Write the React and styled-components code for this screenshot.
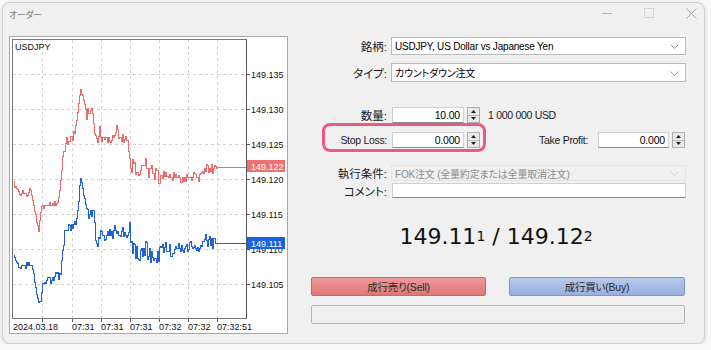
import React from 'react';
import styled, { createGlobalStyle } from 'styled-components';

const Global = createGlobalStyle`
  html, body { margin: 0; padding: 0; background: #f8f8f8; }
  body {
    font-family: "Liberation Sans", "Noto Sans CJK JP", sans-serif;
    font-size: 10px;
    letter-spacing: -0.2px;
    color: #000;
    font-feature-settings: "palt";
  }
`;

const Window = styled.div`
  margin: 2px 0 0 2px;
  width: 701px;
  height: 340px;
  border: 1px solid #cfcfcf;
  border-radius: 8px;
  background: #f0f0f0;
  box-shadow: 0 1px 4px rgba(0, 0, 0, 0.12);
  display: flex;
  flex-direction: column;
  overflow: hidden;
`;

const TitleBar = styled.div`
  height: 33px;
  display: flex;
  align-items: center;
  padding: 0 0 0 6px;
  box-sizing: border-box;
`;

const Title = styled.div`
  flex: 1;
  color: #7a7a7a;
  font-family: "Noto Sans CJK JP", sans-serif;
  font-size: 9px;
  letter-spacing: -0.4px;
  margin-top: -11px;
`;

const WinButton = styled.div`
  width: 26px;
  height: 22px;
  margin-left: 16px;
  display: flex;
  align-items: center;
  justify-content: center;
  margin-top: -13px;
`;

const Body = styled.div`
  flex: 1;
  display: flex;
`;

const ChartPanel = styled.div`
  margin-left: 6px;
  width: 277px;
  height: 296px;
  border: 1px solid #a8a8a8;
  background: #fff;
  line-height: 0;
`;

const FormPanel = styled.div`
  flex: 1;
  display: flex;
  flex-direction: column;
`;

const Row = styled.div`
  display: flex;
  align-items: center;
  height: ${(p) => p.$h || 16}px;
  margin-top: ${(p) => p.$mt || 0}px;
  position: relative;
`;

const Label = styled.div`
  width: ${(p) => p.$w || 99}px;
  text-align: right;
  color: #1a1a1a;
  white-space: nowrap;
  flex: none;
  font-size: ${(p) => (p.$latin ? 10.5 : 11.5)}px;
  letter-spacing: ${(p) => (p.$latin ? -0.3 : 0)}px;
`;

const SelectBox = styled.div`
  margin-left: 4px;
  width: 295px;
  height: 100%;
  box-sizing: border-box;
  border: 1px solid ${(p) => (p.$disabled ? '#e4e4e4' : '#b9b9b9')};
  background: ${(p) => (p.$disabled ? '#f0f0f0' : '#fff')};
  color: ${(p) => (p.$disabled ? '#8c8c8c' : '#000')};
  display: flex;
  align-items: center;
  padding-left: 3px;
  position: relative;
  white-space: nowrap;
`;

const Chevron = styled.svg`
  position: absolute;
  right: 6px;
  top: 50%;
  margin-top: -2px;
`;

const NumInput = styled.div`
  margin-left: ${(p) => p.$ml ?? 5}px;
  width: ${(p) => p.$w || 72}px;
  height: 100%;
  box-sizing: border-box;
  background: #fff;
  border: 1px solid #d0d0d0;
  border-bottom-color: #8a8a8a;
  padding-right: 3px;
  display: flex;
  align-items: center;
  justify-content: flex-end;
  font-size: 10.5px;
`;

const TextInput = styled.div`
  margin-left: 5px;
  width: 294px;
  height: 100%;
  box-sizing: border-box;
  background: #fff;
  border: 1px solid #d0d0d0;
  border-bottom-color: #8a8a8a;
`;

const Spin = styled.div`
  margin-left: 3px;
  width: 13px;
  height: 16px;
  box-sizing: border-box;
  border: 1px solid #adadad;
  background: #e9e9e9;
  display: flex;
  flex-direction: column;
`;

const SpinHalf = styled.div`
  flex: 1;
  display: flex;
  align-items: center;
  justify-content: center;
  & + & { border-top: 1px solid #b8b8b8; }
`;

const Note = styled.div`
  margin-left: 8px;
  color: #1a1a1a;
  font-size: 10.5px;
  letter-spacing: -0.3px;
`;

const Highlight = styled.div`
  position: absolute;
  left: 34px;
  top: -9px;
  width: 164px;
  height: 29px;
  box-sizing: border-box;
  border: 3px solid #ec5a84;
  border-radius: 8px;
  pointer-events: none;
`;

const PriceLine = styled.div`
  margin-top: 23px;
  height: 30px;
  display: flex;
  align-items: center;
  justify-content: center;
  font-family: "DejaVu Sans", sans-serif;
  font-size: 22px;
  letter-spacing: 0;
  color: #111;
  white-space: pre;
`;

const Small = styled.span`
  font-size: 14px;
`;

const Buttons = styled.div`
  margin: 26px 0 0 23px;
  display: flex;
  gap: 23px;
`;

const TradeButton = styled.div`
  width: ${(p) => p.$w}px;
  height: 19px;
  box-sizing: border-box;
  border-radius: 2px;
  display: flex;
  align-items: center;
  justify-content: center;
  font-size: 10.5px;
  color: #2a2a2a;
  border: 1px solid ${(p) => (p.$sell ? '#c36a6a' : '#7f97c7')};
  background: ${(p) =>
    p.$sell
      ? 'linear-gradient(#ee9a9a, #de7676)'
      : 'linear-gradient(#b7c8ea, #98afde)'};
`;

const Progress = styled.div`
  margin: 9px 0 0 23px;
  width: 374px;
  height: 19px;
  box-sizing: border-box;
  border: 1px solid #b5b5b5;
  border-radius: 2px;
  background: #efefef;
`;

/* ---------- chart ---------- */

function rng(seed) {
  let s = seed;
  return () => {
    s = (s * 1103515245 + 12345) & 0x7fffffff;
    return s / 0x7fffffff;
  };
}

function interp(keys, x) {
  for (let i = 0; i < keys.length - 1; i++) {
    const [x0, y0] = keys[i];
    const [x1, y1] = keys[i + 1];
    if (x >= x0 && x <= x1) return y0 + ((y1 - y0) * (x - x0)) / (x1 - x0 || 1);
  }
  return keys[keys.length - 1][1];
}

function series(keys, amps, seed, xEnd) {
  const r = rng(seed);
  let d = '';
  for (let x = 13; x <= xEnd; x++) {
    let y = interp(keys, x);
    let amp = 0;
    let prob = 0.5;
    for (const [a, b, v, pr] of amps) if (x >= a && x <= b) { amp = v; prob = pr; }
    if (amp && r() < prob) y += (r() < 0.5 ? -1 : 1) * Math.round(2 + r() * amp);
    y = Math.round(y) + 0.5;
    d += d ? ` H${x + 0.5} V${y}` : `M${x + 0.5} ${y}`;
  }
  return d;
}

const redKeys = [
  [13, 181], [16, 188], [20, 193], [27, 193], [30, 190], [33, 205], [36, 222], [38, 228],
  [40, 212], [42, 205], [55, 205], [58, 200], [60, 180], [62, 160], [66, 142], [72, 140],
  [76, 120], [79, 95], [81, 90], [83, 100], [86, 113], [92, 113], [95, 135], [97, 140],
  [99, 131], [101, 137], [113, 137], [116, 130], [120, 137], [127, 144], [130, 165],
  [133, 166], [145, 165], [150, 172], [160, 175], [170, 177], [200, 177], [203, 168],
  [216, 168], [218, 166], [246, 166],
];
const redAmps = [[13, 58, 2, 0.35], [60, 128, 4, 0.5], [130, 162, 7, 0.75], [163, 215, 3, 0.65]];

const blueKeys = [
  [13, 255], [16, 262], [20, 265], [32, 265], [35, 290], [37, 298], [40, 298], [42, 285],
  [45, 280], [53, 280], [55, 272], [58, 275], [60, 270], [62, 250], [64, 230], [70, 230],
  [74, 225], [77, 210], [79, 185], [81, 180], [83, 195], [86, 214], [93, 214], [95, 240],
  [97, 246], [99, 235], [110, 235], [113, 230], [127, 232], [129, 222], [131, 245],
  [133, 250], [140, 255], [145, 248], [148, 256], [155, 258], [162, 252], [170, 250],
  [185, 246], [200, 245], [204, 236], [207, 242], [215, 243], [246, 243],
];
const blueAmps = [[13, 58, 2, 0.45], [60, 128, 4, 0.55], [130, 165, 7, 0.75], [166, 215, 4, 0.65]];

const prices = ['149.135', '149.130', '149.125', '149.120', '149.115', '149.110', '149.105'];
const priceY = (i) => 74 + i * 35;
const ticks = [42, 72, 101, 130, 159, 188, 217];
const times = ['07:31', '07:31', '07:31', '07:32', '07:32', '07:32:51'];

function Chart() {
  const red = series(redKeys, redAmps, 7, 217) + ' H246';
  const blue = series(blueKeys, blueAmps, 19, 217) + ' H246';
  return (
    <svg width="277" height="296" viewBox="10 37 277 296" fontFamily="Liberation Sans, sans-serif" fontSize="9" letterSpacing="0">
      {prices.map((p, i) => (
        <g key={p}>
          <line x1="13" x2="246" y1={priceY(i) + 0.5} y2={priceY(i) + 0.5} stroke="#d2d2d2" strokeDasharray="3 3" />
          <line x1="246" x2="250" y1={priceY(i) + 0.5} y2={priceY(i) + 0.5} stroke="#555" />
          <text x="251" y={priceY(i) + 3.5} fill="#111">{p}</text>
        </g>
      ))}
      {ticks.map((t) => (
        <g key={t}>
          <line x1={t + 0.5} x2={t + 0.5} y1="40" y2="318" stroke="#d2d2d2" strokeDasharray="3 3" />
          <line x1={t + 0.5} x2={t + 0.5} y1="318" y2="322" stroke="#555" />
        </g>
      ))}
      <rect x="12.5" y="39.5" width="234" height="279" fill="none" stroke="#777" />
      <line x1="246.5" x2="246.5" y1="39.5" y2="318.5" stroke="#555" />
      <text x="15" y="50" fill="#111">USDJPY</text>
      <path d={red} fill="none" stroke="#ec6b6b" strokeWidth="1" shapeRendering="crispEdges" />
      <path d={blue} fill="none" stroke="#1f63d6" strokeWidth="1" shapeRendering="crispEdges" />
      <rect x="247" y="160" width="38" height="12" fill="#f07270" />
      <text x="251" y="169.5" fill="#fff">149.122</text>
      <rect x="247" y="237" width="38" height="12" fill="#1565e0" />
      <text x="251" y="246.5" fill="#fff">149.111</text>
      <text x="13" y="330" fill="#111">2024.03.18</text>
      {times.map((t, i) => (
        <text key={i} x={ticks[i + 1]} y="330" fill="#111">{t}</text>
      ))}
    </svg>
  );
}

const ChevronIcon = ({ color = '#9a9a9a' }) => (
  <Chevron width="9" height="5" viewBox="0 0 9 5">
    <polyline points="0.5,0.5 4.5,4.5 8.5,0.5" fill="none" stroke={color} strokeWidth="1" />
  </Chevron>
);

const Spinner = () => (
  <Spin>
    <SpinHalf>
      <svg width="5" height="3" viewBox="0 0 5 3"><polygon points="2.5,0 5,3 0,3" fill="#222" /></svg>
    </SpinHalf>
    <SpinHalf>
      <svg width="5" height="3" viewBox="0 0 5 3"><polygon points="0,0 5,0 2.5,3" fill="#222" /></svg>
    </SpinHalf>
  </Spin>
);

export default function App() {
  return (
    <>
      <Global />
      <Window>
        <TitleBar>
          <Title>オーダー</Title>
          <WinButton>
            <svg width="10" height="10" viewBox="0 0 10 10"><line x1="0" x2="10" y1="5.5" y2="5.5" stroke="#b5b5b5" /></svg>
          </WinButton>
          <WinButton>
            <svg width="10" height="10" viewBox="0 0 10 10"><rect x="0.5" y="0.5" width="9" height="9" fill="none" stroke="#d6d6d6" /></svg>
          </WinButton>
          <WinButton>
            <svg width="11" height="11" viewBox="0 0 11 11"><path d="M0.5 0.5 L10.5 10.5 M10.5 0.5 L0.5 10.5" stroke="#a8a8a8" /></svg>
          </WinButton>
        </TitleBar>
        <Body>
          <ChartPanel>
            <Chart />
          </ChartPanel>
          <FormPanel>
            <Row $h={18} $mt={1}>
              <Label>銘柄:</Label>
              <SelectBox>
                USDJPY, US Dollar vs Japanese Yen
                <ChevronIcon />
              </SelectBox>
            </Row>
            <Row $h={19} $mt={8}>
              <Label>タイプ:</Label>
              <SelectBox>
                カウントダウン注文
                <ChevronIcon />
              </SelectBox>
            </Row>
            <Row $mt={25}>
              <Label>数量:</Label>
              <NumInput>10.00</NumInput>
              <Spinner />
              <Note>1 000 000 USD</Note>
            </Row>
            <Row $mt={9}>
              <Highlight />
              <Label $latin>Stop Loss:</Label>
              <NumInput>0.000</NumInput>
              <Spinner />
              <Label $latin $w={108}>Take Profit:</Label>
              <NumInput $ml={10} $w={71}>0.000</NumInput>
              <Spinner />
            </Row>
            <Row $mt={17}>
              <Label>執行条件:</Label>
              <SelectBox $disabled>
                FOK注文 (全量約定または全量取消注文)
                <ChevronIcon color="#d4d4d4" />
              </SelectBox>
            </Row>
            <Row $h={15} $mt={2}>
              <Label>コメント:</Label>
              <TextInput />
            </Row>
            <PriceLine>
              149.11<Small>1</Small> / 149.12<Small>2</Small>
            </PriceLine>
            <Buttons>
              <TradeButton $sell $w={175}>成行売り(Sell)</TradeButton>
              <TradeButton $w={176}>成行買い(Buy)</TradeButton>
            </Buttons>
            <Progress />
          </FormPanel>
        </Body>
      </Window>
    </>
  );
}
